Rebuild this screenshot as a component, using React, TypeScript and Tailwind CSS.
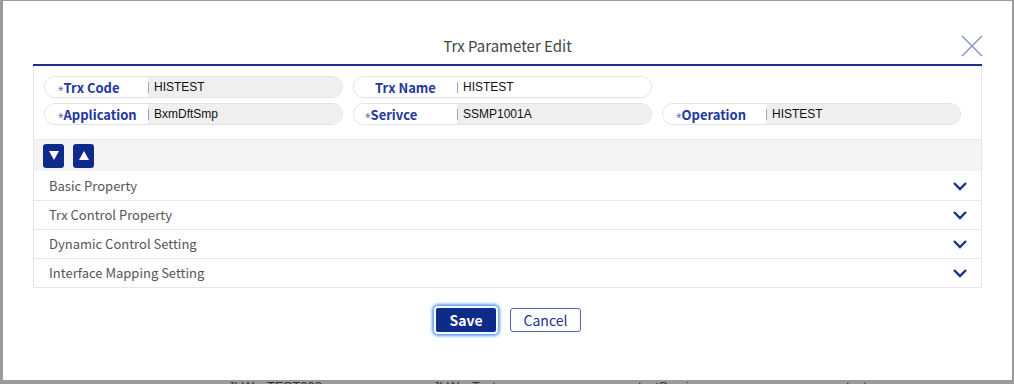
import React from "react";

const ui = { fontFamily: '"Noto Sans CJK KR", "Noto Sans", sans-serif' };
const mono = { fontFamily: '"Liberation Sans", Arial, sans-serif' };

type Field = { label: string; value: string; required: boolean; editable?: boolean; pad: string };

const fields: (Field | null)[] = [
  { label: "Trx Code", value: "HISTEST", required: true, pad: "pl-[13px]" },
  { label: "Trx Name", value: "HISTEST", required: false, editable: true, pad: "pl-[21px]" },
  null,
  { label: "Application", value: "BxmDftSmp", required: true, pad: "pl-[13px]" },
  { label: "Serivce", value: "SSMP1001A", required: true, pad: "pl-[11px]" },
  { label: "Operation", value: "HISTEST", required: true, pad: "pl-[13px]" },
];

const sections = ["Basic Property", "Trx Control Property", "Dynamic Control Setting", "Interface Mapping Setting"];

function FieldPill({ f }: { f: Field }) {
  return (
    <div className="flex h-[22px] w-[299px] overflow-hidden rounded-full border border-[#e2e2e2]">
      <div className={`flex w-[103px] items-center bg-white ${f.pad}`}>
        {f.required && <span className="mt-[5px] text-[10px] leading-none text-[#6b63a8]">*</span>}
        <span className="text-[13px] font-bold leading-none text-[#2238a0]" style={ui}>
          {f.label}
        </span>
      </div>
      <div className={`flex flex-1 items-center ${f.editable ? "bg-white" : "bg-[#efefef]"}`}>
        <span className="h-[11px] w-px bg-[#9aa3c9]" />
        <span className="pl-[5px] text-[12px] leading-none text-[#111]" style={mono}>
          {f.value}
        </span>
      </div>
    </div>
  );
}

function Chevron() {
  return (
    <svg width="16" height="10" viewBox="0 0 16 10">
      <polyline points="2,2 8,8 14,2" fill="none" stroke="#1a2f8f" strokeWidth="2.4" />
    </svg>
  );
}

export default function App() {
  return (
    <div className="h-[384px] w-[1014px] overflow-hidden bg-[#9b9b9b]">
      <div className="relative ml-[3px] mr-[2px] mt-px flex h-[379px] flex-col bg-white px-[30px]">
        {/* header */}
        <div className="flex h-[65px] justify-center border-b-2 border-[#1a2f8f] pt-[35px]">
          <span className="text-[15px] leading-[20px] text-[#444]" style={ui}>
            Trx Parameter Edit
          </span>
        </div>
        <svg className="absolute right-[29px] top-[34px]" width="22" height="22" viewBox="0 0 22 22">
          <path d="M1 1 L21 21 M21 1 L1 21" stroke="#8393c9" strokeWidth="1.4" />
        </svg>

        {/* content box */}
        <div className="border border-t-0 border-[#e6e6e6]">
          <div className="grid grid-cols-[299px_299px_299px] gap-x-[10px] gap-y-[5px] border-b border-[#ececec] px-[10px] pb-[14px] pt-[10px]">
            {fields.map((f, i) => (f ? <FieldPill key={i} f={f} /> : <div key={i} />))}
          </div>

          <div className="flex h-[31px] items-center gap-[9px] bg-[#f4f4f4] px-[9px]">
            <button className="flex h-[24px] w-[21px] items-center justify-center rounded-[3px] bg-[#0e2a8a]">
              <svg width="10" height="9" viewBox="0 0 10 9">
                <polygon points="0,0 10,0 5,9" fill="white" />
              </svg>
            </button>
            <button className="flex h-[24px] w-[21px] items-center justify-center rounded-[3px] bg-[#0e2a8a]">
              <svg width="10" height="9" viewBox="0 0 10 9">
                <polygon points="0,9 10,9 5,0" fill="white" />
              </svg>
            </button>
          </div>

          {sections.map((s, i) => (
            <div
              key={s}
              className={`flex h-[29px] items-center justify-between pl-[15px] pr-[13px] ${i > 0 ? "border-t border-[#e8e8e8]" : ""}`}
            >
              <span className="text-[13px] text-[#555]" style={ui}>
                {s}
              </span>
              <Chevron />
            </div>
          ))}
        </div>

        {/* footer */}
        <div className="flex justify-center gap-[12px] pt-[18px]">
          <button
            className="h-[28px] w-[64px] rounded-[4px] border-2 border-white bg-[#0e2a8a] text-[14px] font-bold text-white shadow-[0_0_3px_2px_#5aa0ff]"
            style={ui}
          >
            Save
          </button>
          <button
            className="mt-[2px] h-[24px] w-[71px] rounded-[3px] border border-[#5064b4] bg-white text-[14px] text-[#1d3490]"
            style={ui}
          >
            Cancel
          </button>
        </div>
      </div>

      {/* table rows behind the modal */}
      <div className="flex pl-[228px] text-[13px] leading-[14px] text-[#333]" style={mono}>
        <span className="w-[205px]">JbWccTEST003</span>
        <span className="w-[205px]">JbWccTest</span>
        <span className="w-[208px]">testService</span>
        <span>test</span>
      </div>
    </div>
  );
}
